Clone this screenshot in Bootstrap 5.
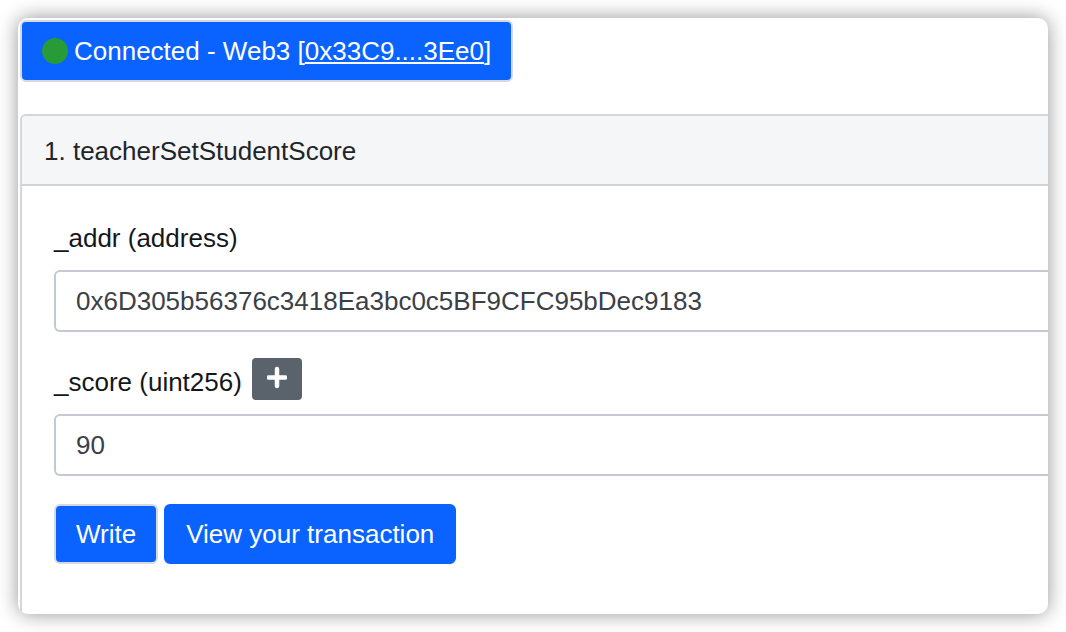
<!DOCTYPE html>
<html lang="en">
<head>
<meta charset="utf-8">
<meta name="viewport" content="width=device-width, initial-scale=1">
<title>Write Contract</title>
<link href="https://cdn.jsdelivr.net/npm/bootstrap@5.3.0/dist/css/bootstrap.min.css" rel="stylesheet">
<style>
  body { font-family: "Liberation Sans", Arial, sans-serif; font-size: 26px; line-height: 38px; color: #212529; background: #fff; }
  .window-frame { margin: 18px; padding: 2px 0 0 2px; border-radius: 10px; background: #fff; box-shadow: 0 0 20px rgba(0, 0, 0, .42); }
  .btn { --bs-btn-font-size: 26px; --bs-btn-line-height: 38px; --bs-btn-border-radius: 6px; --bs-btn-border-width: 2px; --bs-btn-padding-x: 20px; --bs-btn-padding-y: 9px; }
  .btn-primary { --bs-btn-bg: #0a63ff; --bs-btn-border-color: #0a63ff; }
  .btn-outlined { --bs-btn-border-color: #d5dae2; }
  .btn-connect { --bs-btn-padding-y: 10px; gap: 6px; }
  .status-dot { width: 26px; height: 26px; background: #279b37; }
  .method-card { --bs-card-border-color: #d5d6d8; margin-top: 32px; border-width: 2px 0 0 2px; border-radius: 6px 0 0 0; background: transparent; }
  .method-card .card-header { padding: 16px 22px 14px; border-bottom: 2px solid #cfd1d5; background: #f5f6f8; border-radius: 4px 0 0 0; }
  .method-card .card-body { padding: 34px 0 50px 32px; }
  .form-label { margin: 0; line-height: 36px; color: #14171a; }
  .field { margin-bottom: 26px; }
  .field-head { margin-bottom: 14px; gap: 10px; }
  .form-control { font-size: 26px; line-height: 38px; padding: 10px 20px; border: 2px solid #c3c8d2; border-right: 0; border-radius: 6px 0 0 6px; color: #3b4047; }
  .form-actions { margin-top: 28px; gap: 6px; }
  .form-actions .btn { --bs-btn-line-height: 36px; --bs-btn-padding-y: 10px; }
  .btn-plus { --bs-btn-padding-x: 13px; --bs-btn-padding-y: 6px; --bs-btn-border-radius: 4px; --bs-btn-bg: #5a626c; --bs-btn-border-color: #5a626c; height: 42px; line-height: 0; }
</style>
</head>
<body>
<main class="window-frame overflow-hidden">
  <button type="button" class="btn btn-primary btn-outlined btn-connect d-inline-flex align-items-center">
    <span class="status-dot rounded-circle"></span>
    <span>Connected - Web3 [<u>0x33C9....3Ee0</u>]</span>
  </button>

  <section class="card method-card">
    <div class="card-header">1. teacherSetStudentScore</div>
    <form class="card-body">
      <div class="field">
        <div class="field-head d-flex">
          <label class="form-label" for="addr">_addr (address)</label>
        </div>
        <input class="form-control" id="addr" type="text" value="0x6D305b56376c3418Ea3bc0c5BF9CFC95bDec9183" spellcheck="false">
      </div>
      <div>
        <div class="field-head d-flex align-items-end">
          <label class="form-label" for="score">_score (uint256)</label>
          <button type="button" class="btn btn-secondary btn-plus" aria-label="Add zeros">
            <svg width="20" height="26" viewBox="0 0 20 26" fill="none" stroke="#fff" stroke-width="4.500" stroke-linecap="round" aria-hidden="true"><path d="M10 3v17M1.500 11.500h17"/></svg>
          </button>
        </div>
        <input class="form-control" id="score" type="text" value="90">
      </div>
      <div class="form-actions d-flex">
        <button type="button" class="btn btn-primary btn-outlined">Write</button>
        <button type="button" class="btn btn-primary">View your transaction</button>
      </div>
    </form>
  </section>
</main>
<script src="https://cdn.jsdelivr.net/npm/bootstrap@5.3.0/dist/js/bootstrap.bundle.min.js"></script>
</body>
</html>
